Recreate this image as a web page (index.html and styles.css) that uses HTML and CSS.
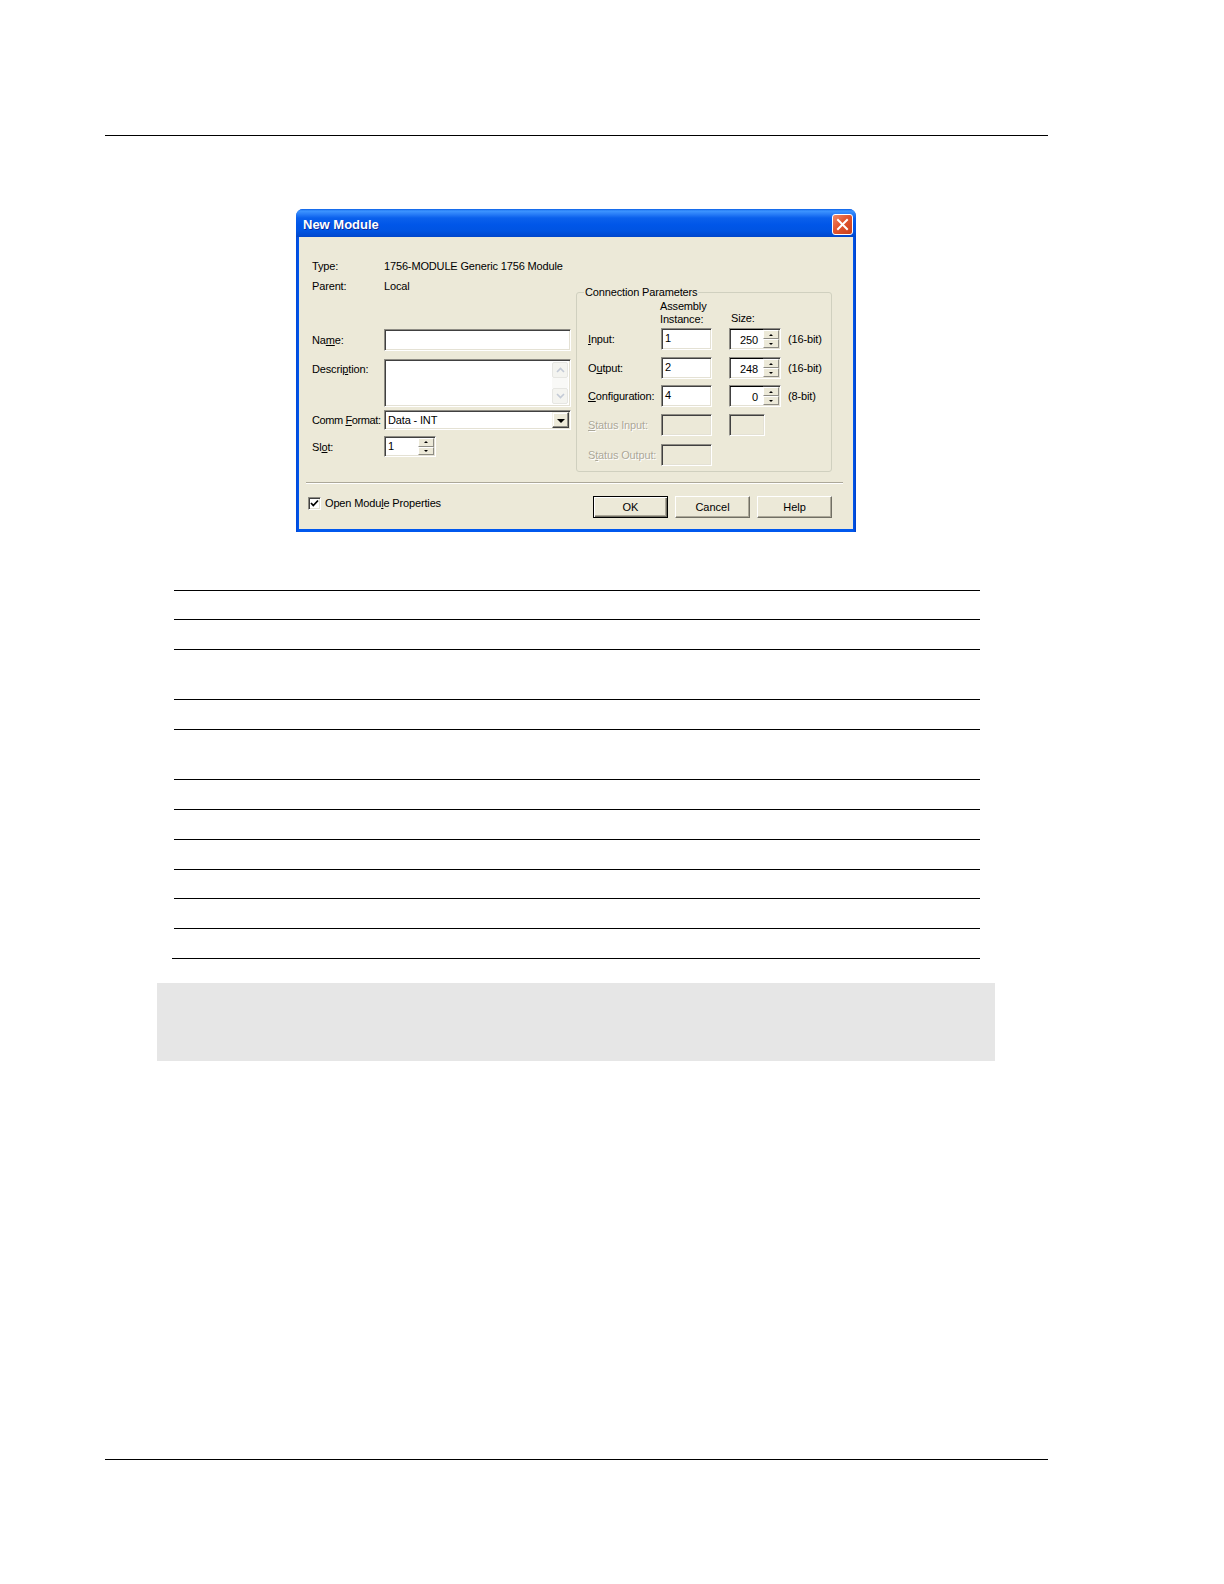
FILE: index.html
```html
<!DOCTYPE html>
<html>
<head>
<meta charset="utf-8">
<title>New Module</title>
<link rel="stylesheet" href="styles.css">
</head>
<body>
<div class="rule rule-top"></div>

<div class="dialog">
  <div class="titlebar">
    <span class="title">New Module</span>
    <span class="close">
      <svg width="21" height="21" viewBox="0 0 21 21"><path d="M6 6 L15 15 M15 6 L6 15" stroke="#fff" stroke-width="2" stroke-linecap="square"/></svg>
    </span>
  </div>
  <div class="client">
    <div class="top">
      <div class="left">
        <div class="info-row"><span class="lbl">Type:</span><span>1756-MODULE Generic 1756 Module</span></div>
        <div class="info-row"><span class="lbl">Parent:</span><span>Local</span></div>

        <div class="field-row row-name"><span class="lbl">Na<u>m</u>e:</span><div class="box box-name"></div></div>
        <div class="field-row row-desc"><span class="lbl lbl-top">Descri<u>p</u>tion:</span>
          <div class="box box-desc">
            <div class="vscroll">
              <span class="sbtn"><svg width="9" height="6" viewBox="0 0 9 6"><path d="M1 5 L4.5 1.5 L8 5" fill="none" stroke="#C3CAD6" stroke-width="1.6"/></svg></span>
              <span class="strack"></span>
              <span class="sbtn"><svg width="9" height="6" viewBox="0 0 9 6"><path d="M1 1 L4.5 4.5 L8 1" fill="none" stroke="#C3CAD6" stroke-width="1.6"/></svg></span>
            </div>
          </div>
        </div>
        <div class="field-row row-comm"><span class="lbl lbl-tight">Comm <u>F</u>ormat:</span>
          <div class="box box-comm"><span class="val">Data - INT</span><span class="dd"><span class="tri-down"></span></span></div>
        </div>
        <div class="field-row row-slot"><span class="lbl">Sl<u>o</u>t:</span>
          <div class="box spin spin-slot"><span class="val">1</span><span class="spinbtns"><span class="sb"><span class="tri-up"></span></span><span class="sb"><span class="tri-dn"></span></span></span></div>
        </div>
      </div>

      <div class="group">
        <span class="group-title">Connection Parameters</span>
        <div class="grid">
          <span class="hdr-lbl"></span>
          <div class="hdr-asm">Assembly<br>Instance:</div>
          <div class="hdr-size">Size:</div>
          <span class="hdr-unit"></span>

          <span class="glbl"><u>I</u>nput:</span>
          <div class="box ibox"><span class="val">1</span></div>
          <div class="box spin sbox"><span class="val r">250</span><span class="spinbtns"><span class="sb"><span class="tri-up"></span></span><span class="sb"><span class="tri-dn"></span></span></span></div>
          <span class="unit">(16-bit)</span>

          <span class="glbl">O<u>u</u>tput:</span>
          <div class="box ibox"><span class="val">2</span></div>
          <div class="box spin sbox"><span class="val r">248</span><span class="spinbtns"><span class="sb"><span class="tri-up"></span></span><span class="sb"><span class="tri-dn"></span></span></span></div>
          <span class="unit">(16-bit)</span>

          <span class="glbl"><u>C</u>onfiguration:</span>
          <div class="box ibox"><span class="val">4</span></div>
          <div class="box spin sbox"><span class="val r">0</span><span class="spinbtns"><span class="sb"><span class="tri-up"></span></span><span class="sb"><span class="tri-dn"></span></span></span></div>
          <span class="unit">(8-bit)</span>

          <span class="glbl dis"><u>S</u>tatus Input:</span>
          <div class="box ibox off"></div>
          <div class="box sbox-off off"></div>
          <span class="unit"></span>

          <span class="glbl dis">S<u>t</u>atus Output:</span>
          <div class="box ibox off"></div>
          <span></span>
          <span></span>
        </div>
      </div>
    </div>

    <div class="sep"></div>

    <div class="bottom">
      <div class="chk-wrap">
        <span class="chk"><svg width="9" height="9" viewBox="0 0 9 9"><path d="M1 4 L3.3 6.5 L8 1.5" fill="none" stroke="#000" stroke-width="1.8"/></svg></span>
        <span>Open Modu<u>l</u>e Properties</span>
      </div>
      <div class="btns">
        <span class="btn btn-def">OK</span>
        <span class="btn">Cancel</span>
        <span class="btn">Help</span>
      </div>
    </div>
  </div>
</div>

<div class="rules">
  <div class="r h28"></div>
  <div class="r h29"></div>
  <div class="r h49"></div>
  <div class="r h29"></div>
  <div class="r h49"></div>
  <div class="r h29"></div>
  <div class="r h29"></div>
  <div class="r h29"></div>
  <div class="r h28"></div>
  <div class="r h29"></div>
  <div class="r h29"></div>
  <div class="r r-last"></div>
</div>

<div class="note"></div>

<div class="rule rule-bottom"></div>
</body>
</html>
```

FILE: styles.css
```css
html, body {
  margin: 0;
  padding: 0;
  background: #fff;
}
body {
  width: 1224px;
  min-height: 1584px;
  font-family: "Liberation Sans", Arial, sans-serif;
  overflow: hidden;
}
body::before {
  content: "";
  display: block;
  height: 135px;
}

.rule {
  width: 943px;
  margin-left: 105px;
  height: 0;
  border-top: 1px solid #000;
}
.rule-bottom { margin-top: 398px; }

/* ---------- dialog ---------- */
.dialog {
  margin: 73px 0 0 296px;
  width: 560px;
  box-sizing: border-box;
  padding: 0 3px 3px 3px;
  border-radius: 7px 7px 0 0;
  background: linear-gradient(to right, #0048D8 0, #0058EE 3px, #0058EE calc(100% - 3px), #0040C8 100%);
  font-size: 11px;
  letter-spacing: -0.15px;
  color: #000;
}
.titlebar {
  height: 28px;
  margin: 0 -3px;
  padding: 0 3px 0 7px;
  border-radius: 7px 7px 0 0;
  display: flex;
  align-items: center;
  justify-content: space-between;
  background: linear-gradient(to bottom,
    #0A5FE6 0px, #3D95FF 2px, #2A7FF8 5px, #0A60EC 9px,
    #0056E8 16px, #0054E2 22px, #0049D0 27px, #0046C8 28px);
}
.title {
  color: #fff;
  font-weight: bold;
  font-size: 13px;
  letter-spacing: 0;
  text-shadow: 1px 1px 0 #0A2A9A;
  margin-top: 2px;
}
.close {
  width: 21px;
  height: 21px;
  box-sizing: border-box;
  border: 1px solid #fff;
  border-radius: 3px;
  background: linear-gradient(135deg, #F08A6A 0%, #E2552E 45%, #C8401C 100%);
  display: flex;
  align-items: center;
  justify-content: center;
  margin-top: 2px;
}
.close svg { display: block; margin: -1px; }

.client {
  background: #ECE9D8;
  padding: 19px 21px 11px 13px;
}
.top {
  display: flex;
  align-items: flex-start;
  gap: 5px;
}
.left { width: 259px; }
.lbl {
  width: 72px;
  flex: none;
  white-space: nowrap;
}
.lbl-tight { letter-spacing: -0.4px; }
.info-row {
  display: flex;
  align-items: center;
  height: 20px;
}
.field-row {
  display: flex;
  align-items: center;
}
.row-name { margin-top: 33px; }
.row-desc { margin-top: 8px; align-items: flex-start; }
.lbl-top { padding-top: 4px; }
.row-comm { margin-top: 3px; }
.row-slot { margin-top: 6px; }

/* sunken boxes */
.box {
  box-sizing: border-box;
  background: #fff;
  border: 1px solid;
  border-color: #8E8C84 #FFFFFF #FFFFFF #8E8C84;
  box-shadow: inset 1px 1px 0 #404040, inset -1px -1px 0 #E4E1D4;
  position: relative;
  display: flex;
  align-items: flex-start;
}
.box .val {
  padding: 2px 0 0 3px;
  line-height: 14px;
  flex: 1;
}
.box .val.r {
  text-align: right;
  padding: 3px 5px 0 0;
}
.box-name { width: 187px; height: 22px; }
.box-desc { width: 187px; height: 48px; justify-content: flex-end; }
.box-comm { width: 187px; height: 20px; }
.box-comm .val { padding-top: 2px; }

.vscroll {
  width: 16px;
  margin: 2px 2px 2px 0;
  display: flex;
  flex-direction: column;
  align-self: stretch;
}
.sbtn {
  height: 16px;
  box-sizing: border-box;
  border: 1px solid #E6E6E2;
  border-radius: 2px;
  background: #F4F4F0;
  display: flex;
  align-items: center;
  justify-content: center;
}
.strack {
  flex: 1;
  background: #F9F9F7;
}

.dd {
  width: 17px;
  height: 16px;
  margin: 1px 1px 0 auto;
  box-sizing: border-box;
  background: #ECE9D8;
  border: 1px solid;
  border-color: #F4F2E8 #404040 #404040 #F4F2E8;
  box-shadow: inset -1px -1px 0 #8E8C84, inset 1px 1px 0 #fff;
  display: flex;
  align-items: center;
  justify-content: center;
}
.tri-down {
  width: 0; height: 0;
  border-left: 4px solid transparent;
  border-right: 4px solid transparent;
  border-top: 4px solid #000;
  margin-top: 1px;
}

/* spin controls */
.spin { align-items: stretch; }
.spin-slot { width: 52px; height: 21px; }
.spinbtns {
  width: 16px;
  display: flex;
  flex-direction: column;
  margin: 1px 1px 1px 0;
}
.sb {
  flex: 1;
  box-sizing: border-box;
  background: #ECE9D8;
  border: 1px solid;
  border-color: #fff #8E8C84 #8E8C84 #fff;
  display: flex;
  align-items: center;
  justify-content: center;
}
.tri-up {
  width: 0; height: 0;
  border-left: 2px solid transparent;
  border-right: 2px solid transparent;
  border-bottom: 2px solid #000;
}
.tri-dn {
  width: 0; height: 0;
  border-left: 2px solid transparent;
  border-right: 2px solid transparent;
  border-top: 2px solid #000;
}

/* group box */
.group {
  width: 256px;
  margin-top: 36px;
  box-sizing: border-box;
  border: 1px solid #D0D0BF;
  border-radius: 3px;
  position: relative;
  padding: 7px 0 5px 11px;
}
.group-title {
  position: absolute;
  top: -7px;
  left: 7px;
  line-height: 13px;
  padding: 0 1px;
  background: #ECE9D8;
}
.grid {
  display: grid;
  grid-template-columns: 73px 68px 59px auto;
  grid-template-rows: 28px 29px 28px 29px 30px 22px;
  align-items: start;
}
.hdr-asm {
  line-height: 13px;
  margin-left: -1px;
}
.hdr-size {
  line-height: 13px;
  margin: 12px 0 0 2px;
}
.glbl {
  line-height: 22px;
  white-space: nowrap;
}
.glbl.dis {
  color: #ACA899;
  text-shadow: 1px 1px 0 #fff;
}
.ibox { width: 51px; height: 22px; }
.sbox { width: 52px; height: 22px; }
.sbox-off { width: 36px; height: 22px; }
.off { background: #ECE9D8; }
.unit { line-height: 22px; white-space: nowrap; }

.sep {
  margin: 10px -11px 0 -6px;
  border-top: 1px solid #ACA899;
  border-bottom: 1px solid #fff;
}

.bottom {
  margin-top: 12px;
  height: 22px;
  display: flex;
  align-items: center;
  justify-content: space-between;
}
.chk-wrap {
  display: flex;
  align-items: center;
  gap: 4px;
  margin-left: -4px;
  align-self: flex-start;
  height: 14px;
}
.chk {
  width: 13px;
  height: 13px;
  box-sizing: border-box;
  background: #fff;
  border: 1px solid;
  border-color: #8E8C84 #fff #fff #8E8C84;
  box-shadow: inset 1px 1px 0 #404040, inset -1px -1px 0 #E4E1D4;
  display: flex;
  align-items: center;
  justify-content: center;
}
.btns {
  display: flex;
  gap: 7px;
}
.btn {
  width: 75px;
  height: 22px;
  box-sizing: border-box;
  background: #ECE9D8;
  border: 1px solid;
  border-color: #FFFFFF #716F64 #716F64 #FFFFFF;
  box-shadow: inset -1px -1px 0 #ACA899;
  display: flex;
  align-items: center;
  justify-content: center;
  letter-spacing: 0;
}
.btn-def {
  border-color: #000;
  box-shadow: inset 1px 1px 0 #fff, inset -1px -1px 0 #716F64, inset -2px -2px 0 #ACA899;
}

/* ---------- rules table ---------- */
.rules {
  margin: 58px 0 0 174px;
  width: 806px;
}
.r { border-top: 1px solid #000; }
.h28 { height: 28px; }
.h29 { height: 29px; }
.h49 { height: 49px; }
.r-last { height: 0; margin-left: -2px; }

.note {
  margin: 24px 0 0 157px;
  width: 838px;
  height: 78px;
  background: #E6E6E6;
}
```
